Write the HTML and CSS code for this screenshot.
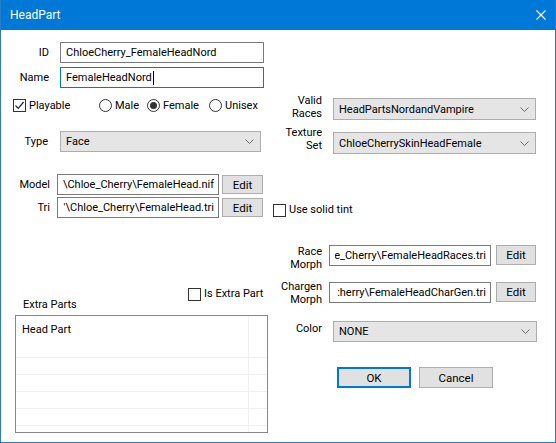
FILE: index.html
```html
<!DOCTYPE html>
<html lang="en">
<head>
<meta charset="utf-8">
<title>HeadPart</title>
<link rel="stylesheet" href="styles.css">
</head>
<body>
<div class="window">
  <div class="titlebar">
    <span class="title">HeadPart</span>
    <svg class="close" width="10" height="10" viewBox="0 0 10 10"><path d="M0.5 0.5L9.5 9.5M9.5 0.5L0.5 9.5" stroke="#fff" stroke-width="1.1" fill="none"/></svg>
  </div>
  <div class="client">
    <div class="row r-id">
      <span class="lbl lbl-w59">ID</span>
      <div class="edit w-top"><span class="txt">ChloeCherry_FemaleHeadNord</span></div>
    </div>
    <div class="row r-name">
      <span class="lbl lbl-w59">Name</span>
      <div class="edit w-top focus"><span class="txt">FemaleHeadNord</span><span class="caret"></span></div>
    </div>

    <div class="cols">
      <div class="col-left">
        <div class="row r-play">
          <div class="opt opt-play"><span class="check"><svg width="11" height="11" viewBox="0 0 11 11"><path d="M1.5 5.5L4.2 8.3L9.6 2" stroke="#222" stroke-width="1.2" fill="none"/></svg></span><span class="opt-txt">Playable</span></div>
          <div class="opt opt-male"><span class="radio"></span><span class="opt-txt">Male</span></div>
          <div class="opt opt-female"><span class="radio on"></span><span class="opt-txt">Female</span></div>
          <div class="opt"><span class="radio"></span><span class="opt-txt">Unisex</span></div>
        </div>
        <div class="row r-type">
          <span class="lbl lbl-type">Type</span>
          <div class="combo w-type"><span class="txt">Face</span><svg class="chev" width="9" height="5" viewBox="0 0 9 5"><path d="M0.5 0.5L4.5 4.5L8.5 0.5" stroke="#6a6a6a" fill="none"/></svg></div>
        </div>
        <div class="row r-model">
          <span class="lbl lbl-file">Model</span>
          <div class="edit w-file"><span class="clip"><span class="txt">\Chloe_Cherry\FemaleHead.nif</span></span></div>
          <button class="btn btn-edit">Edit</button>
        </div>
        <div class="row r-tri">
          <span class="lbl lbl-file">Tri</span>
          <div class="edit w-file"><span class="clip"><span class="txt">'\Chloe_Cherry\FemaleHead.tri</span></span></div>
          <button class="btn btn-edit">Edit</button>
          <div class="opt opt-tint"><span class="check"></span><span class="opt-txt">Use solid tint</span></div>
        </div>
        <div class="row r-extra">
          <span class="extra-lbl">Extra Parts</span>
          <div class="opt opt-isextra"><span class="check"></span><span class="opt-txt">Is Extra Part</span></div>
        </div>
        <div class="listview">
          <div class="lv-row lv-first">Head Part</div>
          <div class="lv-row"></div>
          <div class="lv-row"></div>
          <div class="lv-row"></div>
          <div class="lv-row"></div>
          <div class="lv-row"></div>
          <span class="lv-col"></span>
        </div>
      </div>

      <div class="col-right">
        <div class="row r-races">
          <span class="lbl lbl-r two">Valid<br>Races</span>
          <div class="combo w-rcombo"><span class="txt">HeadPartsNordandVampire</span><svg class="chev" width="9" height="5" viewBox="0 0 9 5"><path d="M0.5 0.5L4.5 4.5L8.5 0.5" stroke="#6a6a6a" fill="none"/></svg></div>
        </div>
        <div class="row r-texture">
          <span class="lbl lbl-r two">Texture<br>Set</span>
          <div class="combo w-rcombo"><span class="txt">ChloeCherrySkinHeadFemale</span><svg class="chev" width="9" height="5" viewBox="0 0 9 5"><path d="M0.5 0.5L4.5 4.5L8.5 0.5" stroke="#6a6a6a" fill="none"/></svg></div>
        </div>
        <div class="row r-race">
          <span class="lbl lbl-r two">Race<br>Morph</span>
          <div class="edit w-morph"><span class="clip"><span class="txt">e_Cherry\FemaleHeadRaces.tri</span></span></div>
          <button class="btn btn-redit">Edit</button>
        </div>
        <div class="row r-chargen">
          <span class="lbl lbl-r two">Chargen<br>Morph</span>
          <div class="edit w-morph"><span class="clip"><span class="txt">:herry\FemaleHeadCharGen.tri</span></span></div>
          <button class="btn btn-redit">Edit</button>
        </div>
        <div class="row r-color">
          <span class="lbl lbl-r lbl-color">Color</span>
          <div class="combo w-color"><span class="txt">NONE</span><svg class="chev" width="9" height="5" viewBox="0 0 9 5"><path d="M0.5 0.5L4.5 4.5L8.5 0.5" stroke="#6a6a6a" fill="none"/></svg></div>
        </div>
        <div class="row r-buttons">
          <button class="btn btn-dlg default">OK</button>
          <button class="btn btn-dlg">Cancel</button>
        </div>
      </div>
    </div>
  </div>
</div>
</body>
</html>
```

FILE: styles.css
```css
* { box-sizing: border-box; }

html, body {
  margin: 0;
  padding: 0;
  background: #ffffff;
}

body {
  font-family: Roboto, "Noto Sans", sans-serif;
  font-size: 11px;
  color: #000;
}

.window {
  width: 556px;
  height: 443px;
  border: 1px solid #2a7bc4;
  border-top: 0;
  background: #fff;
  overflow: hidden;
}

.titlebar {
  height: 30px;
  margin: 0 -1px;
  background: #0078d7;
  display: flex;
  align-items: center;
  padding: 0 10px 0 10px;
}

.title {
  color: #fff;
  font-size: 12px;
  flex: 1;
}

.client {
  padding-top: 12px;
}

.row {
  display: flex;
  align-items: center;
}

.lbl {
  flex-shrink: 0;
  text-align: right;
  line-height: 14px;
}

.lbl-w59 { width: 59px; padding-right: 11px; }

.r-name { margin-top: 4px; }

/* text boxes */
.edit {
  flex-shrink: 0;
  height: 21px;
  border: 1px solid #7a7a7a;
  background: #fff;
  display: flex;
  align-items: center;
  padding: 0 4px 0 5px;
  white-space: nowrap;
}

.edit.focus { border-color: #0078d7; }

.caret {
  display: inline-block;
  width: 1px;
  height: 14px;
  background: #000;
  margin-left: 1px;
}

.w-top { width: 204px; }

.clip {
  flex: 1;
  overflow: hidden;
  display: flex;
  justify-content: flex-end;
}

.clip .txt { flex-shrink: 0; }

/* combo boxes */
.combo {
  flex-shrink: 0;
  height: 21px;
  border: 1px solid #adadad;
  background: #e5e5e5;
  display: flex;
  align-items: center;
  padding: 0 6px 0 5px;
  white-space: nowrap;
}

.combo .txt { flex: 1; }

.chev { flex-shrink: 0; }

/* buttons */
.btn {
  flex-shrink: 0;
  font: inherit;
  font-size: 11.5px;
  color: #000;
  background: #e1e1e1;
  border: 1px solid #adadad;
  padding: 0;
  margin: 0;
}

.btn.default { border: 2px solid #0078d7; }

/* check boxes and radios */
.opt {
  display: flex;
  align-items: center;
  flex-shrink: 0;
  white-space: nowrap;
}

.check {
  width: 13px;
  height: 13px;
  border: 1px solid #333;
  background: #fff;
  flex-shrink: 0;
  display: flex;
  align-items: center;
  justify-content: center;
}

.radio {
  width: 13px;
  height: 13px;
  border: 1px solid #333;
  border-radius: 50%;
  background: #fff;
  flex-shrink: 0;
  display: flex;
  align-items: center;
  justify-content: center;
}

.radio.on::after {
  content: "";
  width: 7px;
  height: 7px;
  border-radius: 50%;
  background: #333;
}

.opt-txt { margin-left: 3px; line-height: 14px; }

/* two columns below the name */
.cols {
  display: flex;
  margin-top: 10px;
}

.col-left {
  width: 271px;
  flex-shrink: 0;
}

.col-right {
  flex: 1;
}

.r-play {
  margin-top: 1px;
  height: 13px;
  padding-left: 12px;
}

.opt-play { width: 86px; }
.opt-male { width: 48px; }
.opt-female { width: 62px; }

.r-type { margin-top: 19px; }
.lbl-type { width: 59px; padding-right: 12px; }
.w-type { width: 201px; }

.r-model { margin-top: 22px; }
.r-tri { margin-top: 2px; }

.lbl-file { width: 56px; padding-right: 7px; }
.w-file { width: 162px; }

.btn-edit {
  width: 41px;
  height: 19px;
  margin-left: 3px;
}

.opt-tint {
  margin-left: 10px;
  align-self: flex-end;
  margin-bottom: 1px;
}

.r-extra {
  margin-top: 69px;
  height: 27px;
  align-items: stretch;
}

.extra-lbl {
  width: 187px;
  padding-left: 22px;
  align-self: flex-end;
  line-height: 14px;
  padding-bottom: 2px;
}

.opt-isextra { align-self: flex-start; }

.listview {
  position: relative;
  margin: 1px 0 0 14px;
  width: 253px;
  height: 118px;
  border: 1px solid #828790;
  background: #fff;
  overflow: hidden;
}

.lv-row {
  height: 17px;
  border-bottom: 1px solid #f0f0f0;
}

.lv-first {
  height: 42px;
  padding: 7px 0 0 6px;
  line-height: 14px;
}

/* column divider of the details view */
.lv-col {
  position: absolute;
  left: 232px;
  top: 0;
  bottom: 0;
  width: 1px;
  background: #f0f0f0;
}

/* right column */
.lbl-r { width: 50px; }
.two { line-height: 13px; align-self: flex-start; }

.w-rcombo { width: 203px; margin-left: 11px; height: 22px; }

.r-races .lbl { margin-top: -4px; }
.r-texture { margin-top: 12px; }
.r-texture .lbl { margin-top: -6px; }

.r-race { margin-top: 91px; }
.r-race .lbl { margin-top: 0; }
.r-chargen { margin-top: 11px; }
.r-chargen .lbl { margin-top: -2px; }

.r-race, .r-chargen { align-items: flex-start; }

.w-morph { width: 162px; margin-left: 7px; }

.btn-redit {
  width: 40px;
  height: 20px;
  margin-left: 5px;
}

.r-color { margin-top: 15px; align-items: flex-start; }
.lbl-color { margin-top: 1px; line-height: 13px; }
.w-color { width: 204px; margin-left: 11px; }

.r-buttons {
  margin-top: 25px;
  padding-left: 65px;
}

.btn-dlg {
  width: 74px;
  height: 21px;
  margin-right: 8px;
}
```
